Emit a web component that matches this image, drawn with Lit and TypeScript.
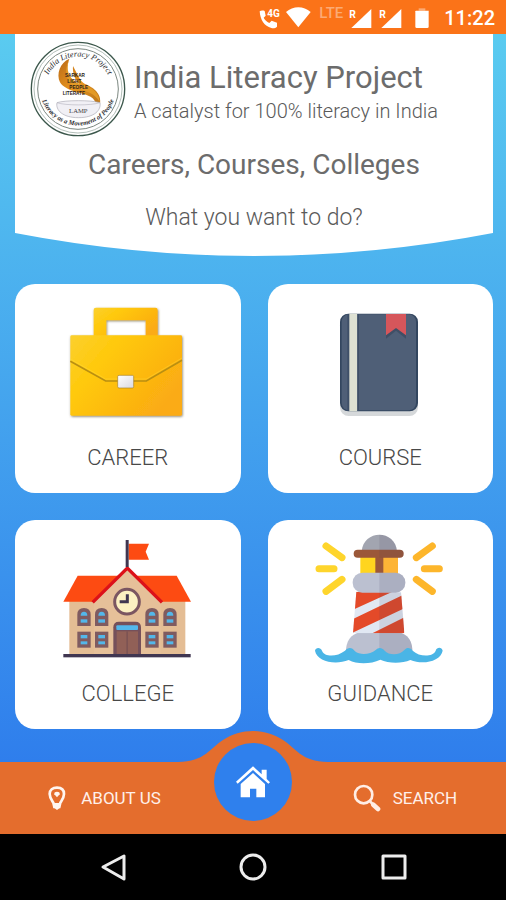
import { LitElement, html, svg, css, type TemplateResult } from "lit";
import { customElement, property } from "lit/decorators.js";

/* ---------- status bar ---------- */

@customElement("status-bar")
class StatusBar extends LitElement {
  static styles = css`
    :host {
      display: flex;
      align-items: center;
      justify-content: flex-end;
      gap: 4px;
      height: 34px;
      padding-right: 11px;
      background: #fb7318;
      color: #fff;
      font-family: Roboto, "Liberation Sans", sans-serif;
    }
    svg {
      display: block;
      height: 34px;
      fill: #fff;
      font-weight: 700;
    }
    .network {
      padding: 0 0 8px 4px;
      font-size: 15px;
      line-height: 16px;
      font-weight: 500;
      color: #fcaa74;
    }
    .time {
      font-size: 20px;
      line-height: 34px;
      font-weight: 500;
      padding-top: 2px;
    }
  `;

  private signal() {
    return html`<svg width="26" viewBox="297 0 78 102" aria-hidden="true">
      <path d="M370 27V84H310Z" />
      <text x="304" y="53" font-size="31">R</text>
    </svg>`;
  }

  render() {
    return html`
      <svg width="23" viewBox="30 0 69 102" aria-hidden="true">
        <path
          d="M32 34C36 31 42 31 47 33L50 47L44 53C48 60 53 65 61 69L68 62L84 68V80C79 84 74 86 67 84C46 78 34 61 32 34Z"
        />
        <text x="55" y="51" font-size="30">4G</text>
      </svg>
      <svg width="25" viewBox="111 0 75 102" aria-hidden="true">
        <path d="M111 36C132 17 164 17 185 36L148 82Z" />
      </svg>
      <span class="network">LTE</span>
      ${this.signal()} ${this.signal()}
      <svg width="33" viewBox="477 0 99 102" aria-hidden="true">
        <path d="M512 25H532V32H512Z" opacity="0.4" />
        <path d="M504 32H542V80Q542 84 538 84H506Q502 84 502 80V34Q502 32 504 32Z" />
      </svg>
      <span class="time">11:22</span>
    `;
  }
}

/* ---------- header panel ---------- */

const lampLogo = html`<svg class="logo" viewBox="60 33 288 288" role="img" aria-label="India Literacy Project logo">
  <defs>
    <path id="upper" d="M109 150A100 100 0 0 1 300 150" />
    <path id="lower" d="M95 208A115 115 0 0 0 313 208" />
    <linearGradient id="flame" x1="0" x2="1" y1="0" y2="1">
      <stop offset="0" stop-color="#b96a18" />
      <stop offset="0.5" stop-color="#e8951f" />
      <stop offset="1" stop-color="#b8741b" />
    </linearGradient>
  </defs>
  <g fill="none">
    <circle cx="204" cy="177" r="140" stroke="#3b574b" stroke-width="4" />
    <circle cx="204" cy="177" r="132" stroke="#8b9d94" stroke-width="2" />
    <circle cx="204" cy="177" r="121" stroke="#7b8780" stroke-width="3" />
  </g>
  <g font-family="Liberation Serif, serif" font-style="italic" fill="#2c2c30">
    <text font-size="25"><textPath href="#upper" startOffset="50%" text-anchor="middle">India Literacy Project</textPath></text>
    <text font-size="20" font-weight="700"><textPath href="#lower" startOffset="50%" text-anchor="middle">Literacy as a Movement of People</textPath></text>
  </g>
  <path d="M178 86C150 98 138 132 150 157C158 171 178 180 197 186C219 192 252 195 258 222H270C276 190 248 171 225 162C210 154 202 132 189 108C187 128 195 150 207 161C176 157 162 131 178 86Z" fill="url(#flame)" />
  <path d="M178 86C166 120 176 146 207 161C230 168 268 178 269 216C254 190 232 186 212 178C180 166 154 140 178 86Z" fill="#e39a26" />
  <g font-family="Liberation Sans, sans-serif" font-size="14" font-weight="700" fill="#2c2118">
    <text x="165" y="141">SARKAR</text>
    <text x="172" y="159">LIGHT</text>
    <text x="178" y="177">PEOPLE</text>
    <text x="158" y="195">LITERATE</text>
  </g>
  <path d="M141 218C165 210 245 210 270 218C274 240 254 263 205 263C158 263 136 240 141 218Z" fill="#f1f0f5" stroke="#aaa9b4" stroke-width="2" />
  <path d="M141 218C165 227 245 227 270 218" fill="none" stroke="#b9b8c2" stroke-width="2" />
  <text x="205" y="248" font-family="Liberation Serif, serif" font-size="20" text-anchor="middle" fill="#3c3c44">LAMP</text>
</svg>`;

@customElement("intro-header")
class IntroHeader extends LitElement {
  static styles = css`
    :host {
      display: block;
      color: #5a5a5a;
      text-align: center;
    }
    .panel {
      background: #fff;
      padding: 7px 15px 0;
    }
    .brand {
      display: flex;
      align-items: center;
      gap: 8px;
      text-align: left;
    }
    .logo {
      flex: none;
      width: 96px;
      height: 96px;
    }
    h1,
    h2,
    p {
      margin: 0;
      font-weight: 300;
    }
    h1,
    h2 {
      font-weight: 400;
      color: #6c6c6c;
    }
    h1 {
      padding-top: 6px;
      font-size: 31px;
      line-height: 38px;
    }
    .tagline {
      font-size: 20px;
      line-height: 28px;
    }
    h2 {
      padding-top: 8px;
      font-size: 28px;
      line-height: 40px;
    }
    .question {
      padding: 21px 0 3px;
      font-size: 23px;
      line-height: 24px;
    }
    .curve {
      display: block;
      width: 100%;
      height: 23px;
      fill: #fff;
    }
  `;

  render() {
    return html`
      <header class="panel">
        <div class="brand">
          ${lampLogo}
          <div>
            <h1>India Literacy Project</h1>
            <p class="tagline">A catalyst for 100% literacy in India</p>
          </div>
        </div>
        <h2>Careers, Courses, Colleges</h2>
        <p class="question">What you want to do?</p>
      </header>
      <svg class="curve" viewBox="0 0 478 23" preserveAspectRatio="none" aria-hidden="true">
        <path d="M0 0Q239 46 478 0Z" />
      </svg>
    `;
  }
}

/* ---------- card pictures ---------- */

const briefcase = html`<svg viewBox="10 6 450 420" aria-hidden="true">
  <defs>
    <linearGradient id="gold" x1="0" y1="0" x2="1" y2="0.6">
      <stop offset="0" stop-color="#fbd02f" />
      <stop offset="0.35" stop-color="#ffc90b" />
      <stop offset="1" stop-color="#fbab13" />
    </linearGradient>
    <linearGradient id="clasp" x1="0" y1="0" x2="1" y2="1">
      <stop offset="0" stop-color="#fff" />
      <stop offset="1" stop-color="#d9d9e0" />
    </linearGradient>
    <filter id="drop" x="-10%" y="-10%" width="120%" height="125%">
      <feDropShadow dx="2" dy="3" stdDeviation="3" flood-color="#5f5434" flood-opacity="0.7" />
    </filter>
  </defs>
  <g filter="url(#drop)">
    <path d="M132 138V60Q132 53 139 53H317Q324 53 324 60V138H288V91H170V138Z" fill="url(#gold)" />
    <rect x="62" y="136" width="335" height="241" rx="4" fill="url(#gold)" />
  </g>
  <path d="M62 214L168 273H290L397 211" fill="none" stroke="#b98f12" stroke-width="5" />
  <path d="M62 207L168 267H290L397 204" fill="none" stroke="#ffdb3c" stroke-width="2" opacity="0.6" />
  <rect x="204" y="256" width="48" height="38" rx="4" fill="url(#clasp)" stroke="#a88226" stroke-width="2" />
</svg>`;

const book = html`<svg viewBox="-11 6 450 420" aria-hidden="true">
  <rect x="94" y="80" width="234" height="298" rx="26" fill="#d5d8da" />
  <rect x="94" y="71" width="234" height="293" rx="25" fill="#33465f" />
  <rect x="99" y="73" width="223" height="288" rx="22" fill="#4f5f77" />
  <path d="M116 72H122V363H116Z" fill="#3e4f68" />
  <path d="M122 71H146V364H122Z" fill="#dee1d3" />
  <path d="M146 72H151V363H146Z" fill="#3e4f68" />
  <path d="M232 78H292V146L262 122L232 146Z" fill="#35445c" opacity="0.6" />
  <path d="M232 72H292V136L262 114L232 136Z" fill="#d6565b" />
</svg>`;

const upperWindow = (x: number) => svg`
  <path d=${`M${x} 288V254Q${x} 234 ${x + 20} 234Q${x + 40} 234 ${x + 40} 254V288Z`} fill="#7f5b60" />
  <path d=${`M${x + 10} 257Q${x + 10} 245 ${x + 20} 245Q${x + 30} 245 ${x + 30} 257Z`} fill="#53b7ea" />
  <rect x=${x + 10} y="268" width="20" height="10" fill="#53b7ea" />`;

const lowerWindow = (x: number) => svg`
  <rect x=${x} y="305" width="40" height="48" fill="#7f5b60" />
  <rect x=${x + 10} y="315" width="20" height="10" fill="#53b7ea" />
  <rect x=${x + 10} y="334" width="20" height="9" fill="#53b7ea" />`;

const windowColumns = [82, 135, 286, 340];

const school = html`<svg viewBox="9 -6 450 420" aria-hidden="true">
  <rect x="58" y="200" width="348" height="175" fill="#e4bd94" />
  <path d="M83 137H380L423 215H40Z" fill="#fd4b12" />
  <path d="M232 115L332 215V375H132V215Z" fill="#e6c099" />
  <path d="M128 217L232 114L336 217" fill="none" stroke="#dc1119" stroke-width="10" />
  <path d="M236 41H297L287 65L297 89H236Z" fill="#fd4b12" />
  <rect x="227" y="30" width="9" height="81" fill="#403651" />
  <circle cx="231" cy="215" r="37" fill="#fcf0c2" stroke="#7b5661" stroke-width="9" />
  <path d="M232 193V215H209" fill="none" stroke="#403651" stroke-width="9" />
  ${windowColumns.map(upperWindow)} ${windowColumns.map(lowerWindow)}
  <path d="M190 374V292Q190 275 207 275H256Q273 275 273 292V374Z" fill="#75505a" />
  <rect x="199" y="286" width="65" height="14" rx="3" fill="#53b7ea" />
  <path d="M200 304H264V374H200Z" fill="#916057" />
  <path d="M229 304H234V374H229Z" fill="#7d5353" />
  <rect x="40" y="372" width="382" height="10" fill="#403651" />
</svg>`;

const lighthouse = html`<svg viewBox="4 9 450 420" aria-hidden="true">
  <defs>
    <clipPath id="tower"><path d="M158 200H292L302 325H148Z" /></clipPath>
    <clipPath id="shade"><rect x="227" y="0" width="200" height="430" /></clipPath>
  </defs>
  <g fill="none" stroke-width="21" stroke-linecap="round">
    <path d="M67 63L115 98M46 131H91M67 199L115 163" stroke="#fed52c" />
    <path d="M386 63L338 98M407 131H362M386 199L338 163" stroke="#fdb62b" />
  </g>
  <path d="M174 80C178 12 276 12 280 80Z" fill="#a2a5b0" />
  <rect x="170" y="94" width="57" height="54" fill="#ffd51f" />
  <rect x="227" y="94" width="56" height="54" fill="#fdb436" />
  <rect x="215" y="94" width="24" height="54" fill="#9b5839" />
  <rect x="150" y="74" width="150" height="24" rx="12" fill="#9b5839" />
  <path d="M127 372C130 340 150 322 178 322H276C304 322 324 340 326 372V390H127Z" fill="#bbc0d0" />
  <g clip-path="url(#tower)">
    <path d="M140 195H310V330H140Z" fill="#e1e8f3" />
    <path d="M140 195H278L140 258ZM140 286L310 204V246L140 326ZM203 326L310 273V330H203Z" fill="#e44a29" />
  </g>
  <rect x="147" y="143" width="158" height="60" rx="29" fill="#bbc0d0" />
  <g clip-path="url(#shade)" fill="#4a3d60" opacity="0.13">
    <path d="M174 80C178 12 276 12 280 80Z" />
    <rect x="150" y="74" width="150" height="24" rx="12" />
    <rect x="147" y="143" width="158" height="60" rx="29" />
    <path d="M158 203H292L302 322H148Z" />
    <path d="M127 372C130 340 150 322 178 322H276C304 322 324 340 326 372V390H127Z" />
  </g>
  <path
    d="M34 377C36 366 51 366 55 377C63 397 100 396 124 377C134 365 146 367 154 379C169 392 200 389 216 375C224 366 235 367 243 377C256 392 289 391 302 375C310 365 321 368 327 377C347 396 387 397 396 377C400 365 415 366 417 377C411 408 360 421 320 405C295 416 255 416 230 404C200 418 160 418 135 405C95 421 40 410 34 377Z"
    fill="#4ab5e6"
  />
</svg>`;

@customElement("topic-card")
class TopicCard extends LitElement {
  @property() label = "";
  @property({ attribute: false }) picture: TemplateResult = html``;

  static styles = css`
    :host {
      display: block;
    }
    .card {
      display: flex;
      flex-direction: column;
      align-items: center;
      gap: 13px;
      width: 100%;
      padding: 8px 0 22px;
      border: 0;
      border-radius: 20px;
      background: #fff;
      color: #484848;
      font: 300 22px/26px Roboto, "Liberation Sans", sans-serif;
      cursor: pointer;
    }
    svg {
      display: block;
      width: 150px;
      height: 140px;
    }
  `;

  render() {
    return html`<button class="card" type="button">${this.picture}<span>${this.label}</span></button>`;
  }
}

/* ---------- bottom tabs ---------- */

@customElement("tab-bar")
class TabBar extends LitElement {
  static styles = css`
    :host {
      display: block;
      position: relative;
      background: #e46d2d;
      font-family: Roboto, "Liberation Sans", sans-serif;
    }
    nav {
      display: grid;
      grid-template-columns: 1fr 78px 1fr;
      align-items: center;
      height: 72px;
    }
    .bump {
      position: absolute;
      left: 50%;
      top: -31px;
      width: 150px;
      height: 32px;
      transform: translateX(-50%);
      fill: #e46d2d;
    }
    .tab {
      display: flex;
      align-items: center;
      justify-content: center;
      gap: 14px;
      color: #fff0ea;
      font-size: 17px;
      line-height: 24px;
      text-decoration: none;
    }
    .about {
      padding-right: 6px;
    }
    .search {
      grid-column: 3;
      gap: 12px;
      padding-left: 12px;
    }
    .home {
      position: absolute;
      left: 50%;
      top: -19px;
      display: grid;
      place-items: center;
      width: 78px;
      height: 78px;
      transform: translateX(-50%);
      border-radius: 50%;
      background: #2f80ed;
    }
  `;

  render() {
    return html`
      <svg class="bump" viewBox="0 0 150 32" aria-hidden="true">
        <path d="M0 32V31C27 31 33 16 45 9C63 -3 87 -3 105 9C117 16 123 31 150 31V32Z" />
      </svg>
      <nav>
        <a class="tab about" href="#about">
          <svg width="20" height="26" viewBox="137 194 60 78" fill="none" stroke="#fff5f0" aria-hidden="true">
            <path d="M159 260L156 247C151 239 145 232 145 221C145 209 154 202 167 202C180 202 188 209 188 221C188 232 182 239 177 247L174 260Z" stroke-width="8" />
            <path d="M158 248H176V262L167 269L158 262Z" fill="#fff5f0" stroke="none" />
            <path d="M167 231L159 222C156 212 178 212 175 222Z" fill="#fff5f0" stroke="none" />
          </svg>
          <span>ABOUT US</span>
        </a>
        <a class="tab search" href="#search">
          <svg width="28" height="28" viewBox="1058 192 84 84" fill="none" stroke="#ffeee6" aria-hidden="true">
            <circle cx="1090" cy="224" r="26" stroke-width="8" />
            <path d="M1109 244L1117 252" stroke-width="8" />
            <path d="M1119 254L1133 267" stroke-width="14" stroke-linecap="round" />
          </svg>
          <span>SEARCH</span>
        </a>
      </nav>
      <a class="home" href="#home" aria-label="Home">
        <svg width="34" height="34" viewBox="710 137 102 102" fill="#fff" aria-hidden="true">
          <path d="M724 194L761 161L797 194V234H771V208H752V234H724Z" />
          <path d="M761 141L787 165V151H802V179L812 189L807 193L761 152L715 193L710 187Z" />
        </svg>
      </a>
    `;
  }
}

/* ---------- system navigation ---------- */

@customElement("system-nav")
class SystemNav extends LitElement {
  static styles = css`
    :host {
      display: grid;
      grid-template-columns: repeat(3, 1fr);
      height: 66px;
      padding: 0 43px;
      background: #000;
    }
    button {
      display: grid;
      place-items: center;
      padding: 0;
      border: 0;
      background: none;
      cursor: pointer;
    }
    svg {
      fill: none;
      stroke: #ededed;
      stroke-width: 3;
      stroke-linejoin: round;
    }
  `;

  render() {
    return html`
      <button type="button" aria-label="Back">
        <svg width="28" height="28" viewBox="0 0 28 28"><path d="M25 3V26L4 14Z" /></svg>
      </button>
      <button type="button" aria-label="Home">
        <svg width="28" height="28" viewBox="0 0 28 28"><circle cx="14" cy="14" r="12" /></svg>
      </button>
      <button type="button" aria-label="Recent apps">
        <svg width="28" height="28" viewBox="0 0 28 28"><rect x="4" y="3" width="22" height="22" /></svg>
      </button>
    `;
  }
}

/* ---------- page ---------- */

const topics = [
  { label: "CAREER", picture: briefcase },
  { label: "COURSE", picture: book },
  { label: "COLLEGE", picture: school },
  { label: "GUIDANCE", picture: lighthouse },
];

@customElement("app-root")
class AppRoot extends LitElement {
  static styles = css`
    :host {
      display: flex;
      flex-direction: column;
      min-height: 100vh;
      font-family: Roboto, "Liberation Sans", sans-serif;
    }
    main {
      flex: 1;
      padding: 0 13px 33px 15px;
      background: linear-gradient(#5acbf0, #2f7eec);
    }
    .topics {
      display: grid;
      grid-template-columns: 1fr 1fr;
      gap: 27px;
      padding-top: 28px;
    }
  `;

  render() {
    return html`
      <status-bar></status-bar>
      <main>
        <intro-header></intro-header>
        <section class="topics">
          ${topics.map((t) => html`<topic-card .label=${t.label} .picture=${t.picture}></topic-card>`)}
        </section>
      </main>
      <tab-bar></tab-bar>
      <system-nav></system-nav>
    `;
  }
}
